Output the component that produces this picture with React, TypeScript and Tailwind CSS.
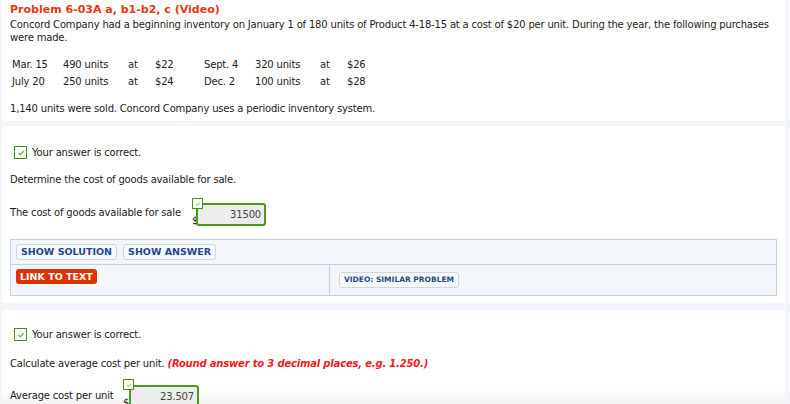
import React from "react";

const Check = ({ size = 13 }: { size?: number }) => (
  <span
    className="inline-flex items-center justify-center border border-[#4b8a1c] bg-white"
    style={{ width: size, height: size }}
  >
    <svg width={size - 5} height={size - 5} viewBox="0 0 10 10">
      <path d="M2 5.2 L4.2 7.2 L8.2 2.8" fill="none" stroke="#5aa02c" strokeWidth="1.4" />
    </svg>
  </span>
);

const rows = [
  ["Mar. 15", "490 units", "at", "$22", "Sept. 4", "320 units", "at", "$26"],
  ["July 20", "250 units", "at", "$24", "Dec. 2", "100 units", "at", "$28"],
];

export default function App() {
  return (
    <div
      className="w-[790px] h-[404px] overflow-hidden bg-[#f2f5f9] text-[#222] text-[10px] tracking-[-0.18px]"
      style={{ fontFamily: "'DejaVu Sans', Verdana, sans-serif" }}
    >
      <div className="ml-[2px] w-[783px] bg-white h-[121px] pl-[8px] pt-[3px]">
        <div className="text-[11px] leading-[14px] font-bold text-[#e23b10] tracking-normal">
          Problem 6-03A a, b1-b2, c (Video)
        </div>
        <p className="leading-[13px] mt-[1px] pr-[8px]">
          Concord Company had a beginning inventory on January 1 of 180 units of Product 4-18-15 at a cost of $20 per unit. During the year, the following purchases were made.
        </p>
        <div className="mt-[12px] ml-[2px] grid grid-cols-[51px_65px_27px_49px_51px_65px_27px_40px]">
          {rows.map((r, i) =>
            r.map((c, j) => (
              <div key={i + "-" + j} className="h-[17px] leading-[17px]">
                {c}
              </div>
            ))
          )}
        </div>
        <p className="mt-[12px] leading-[13px]">
          1,140 units were sold. Concord Company uses a periodic inventory system.
        </p>
      </div>

      <div className="ml-[2px] mt-[5px] w-[783px] bg-white h-[177px] pl-[8px] pt-[20px]">
        <div className="flex items-center gap-[5px] ml-[4px]">
          <Check />
          <span className="leading-[13px]">Your answer is correct.</span>
        </div>
        <p className="mt-[14px] leading-[13px]">Determine the cost of goods available for sale.</p>
        <div className="flex mt-[12px]">
          <span className="w-[182px] shrink-0 mt-[8px] leading-[13px]">The cost of goods available for sale</span>
          <div className="relative w-[76px] h-[28px]">
            <span className="absolute left-0 top-[16px] leading-[13px]">$</span>
            <div className="absolute left-[4px] top-[5px] w-[70px] h-[23px] rounded-[3px] border-2 border-[#4c9a1c] bg-[#ececec] text-right pr-[3px] leading-[19px] text-[#444]">
              31500
            </div>
            <div className="absolute left-0 top-0 flex">
              <Check size={11} />
            </div>
          </div>
        </div>
        <div className="mt-[13px] w-[767px] border border-[#c6d1de] bg-[#f3f6fa]">
          <div className="flex gap-[6px] px-[5px] h-[25px] items-center border-b border-[#c6d1de]">
            <span className="h-[16px] px-[4px] leading-[14px] rounded-[3px] border border-[#cdd6e1] bg-[#f7f9fc] text-[#1f4a8c] font-bold text-[9.5px] tracking-normal">
              SHOW SOLUTION
            </span>
            <span className="h-[16px] px-[4px] leading-[14px] rounded-[3px] border border-[#cdd6e1] bg-[#f7f9fc] text-[#1f4a8c] font-bold text-[9.5px] tracking-normal">
              SHOW ANSWER
            </span>
          </div>
          <div className="flex h-[30px]">
            <div className="w-[319px] border-r border-[#c6d1de] pl-[5px] pt-[4px]">
              <span className="inline-block h-[15px] px-[4px] leading-[15px] rounded-[3px] bg-[#dd3300] text-white font-bold text-[9.5px] tracking-normal">
                LINK TO TEXT
              </span>
            </div>
            <div className="pl-[9px] pt-[6px]">
              <span className="inline-block h-[16px] px-[4px] leading-[14px] rounded-[3px] border border-[#cdd6e1] bg-[#f7f9fc] text-[#1f4a8c] font-bold text-[7.5px] tracking-normal">
                VIDEO: SIMILAR PROBLEM
              </span>
            </div>
          </div>
        </div>
      </div>

      <div className="ml-[2px] mt-[7px] w-[783px] bg-gradient-to-b from-white from-80% to-[#ededed] h-[100px] pl-[8px] pt-[18px]">
        <div className="flex items-center gap-[5px] ml-[4px]">
          <Check />
          <span className="leading-[13px]">Your answer is correct.</span>
        </div>
        <p className="mt-[16px] leading-[13px]">
          Calculate average cost per unit.{" "}
          <span className="font-bold italic text-[#f21a1a]">
            (Round answer to 3 decimal places, e.g. 1.250.)
          </span>
        </p>
        <div className="flex mt-[9px]">
          <span className="w-[113px] shrink-0 mt-[10px] leading-[13px]">Average cost per unit</span>
          <div className="relative w-[76px] h-[34px]">
            <span className="absolute left-0 top-[17px] leading-[13px]">$</span>
            <div className="absolute left-[6px] top-[6px] w-[70px] h-[23px] rounded-[3px] border-2 border-[#4c9a1c] bg-[#ececec] text-right pr-[3px] leading-[19px] text-[#444]">
              23.507
            </div>
            <div className="absolute left-0 top-0 flex">
              <Check size={11} />
            </div>
          </div>
        </div>
      </div>
    </div>
  );
}
